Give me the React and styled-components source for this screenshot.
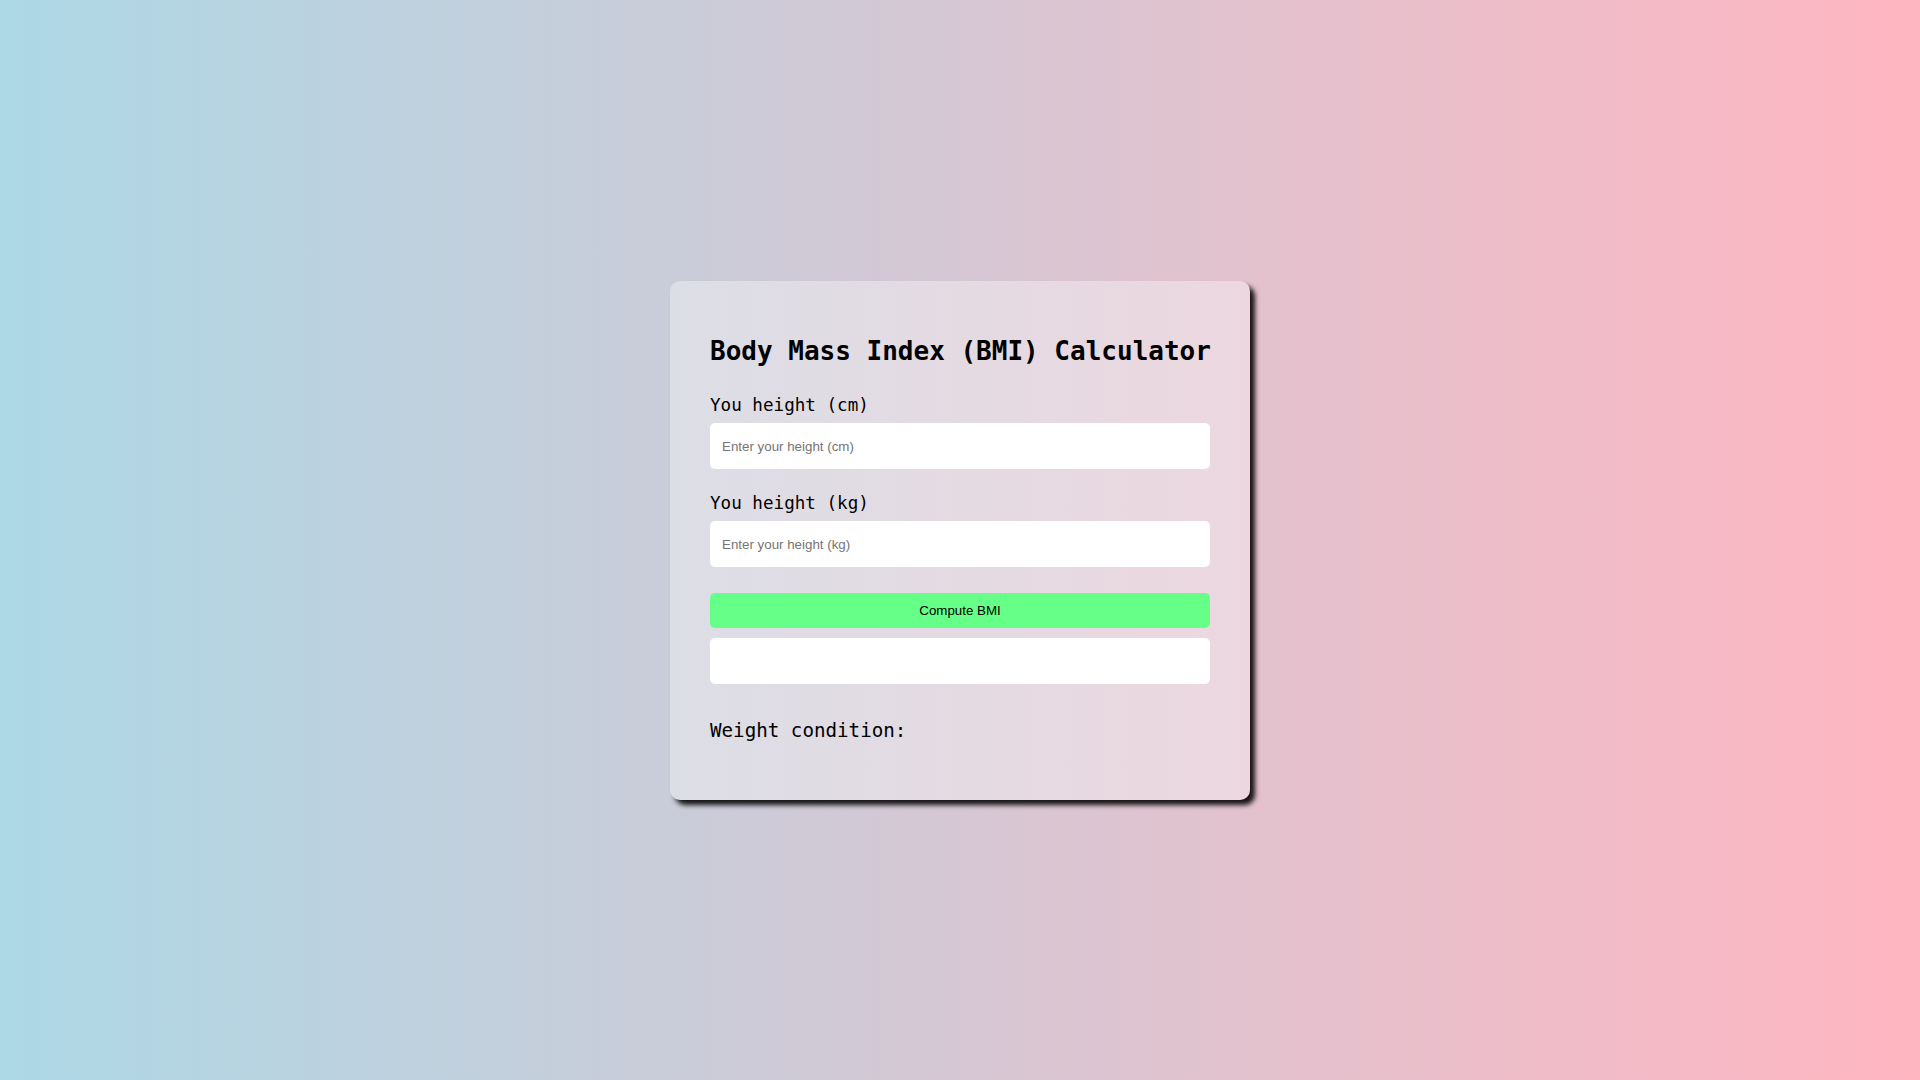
import React, { useState } from "react";
import styled, { createGlobalStyle } from "styled-components";

const GlobalStyle = createGlobalStyle`
  * { box-sizing: border-box; }
  html, body { margin: 0; padding: 0; }
  body {
    min-height: 100vh;
    background: linear-gradient(to right, #add8e6, #ffb6c1);
    font-family: "DejaVu Sans Mono", monospace;
  }
`;

const Page = styled.div`
  min-height: 100vh;
  display: flex;
  align-items: center;
  justify-content: center;
`;

const Card = styled.div`
  width: 580px;
  padding: 40px 40px 58px;
  background: rgba(255, 255, 255, 0.35);
  border-radius: 10px;
  box-shadow: 5px 5px 5px rgba(0, 0, 0, 0.9);
  display: flex;
  flex-direction: column;
`;

const Title = styled.h1`
  margin: 15px 0 0;
  font-size: 26px;
  font-weight: bold;
  color: #000;
  white-space: nowrap;
`;

const Field = styled.div`
  display: flex;
  flex-direction: column;
  gap: 8px;
  margin-top: ${(p) => p.$top}px;
`;

const Label = styled.label`
  font-size: 17.6px;
  color: #000;
`;

const Input = styled.input`
  height: 46px;
  border: none;
  border-radius: 5px;
  padding: 2px 12px 0;
  background: #fff;
  font-family: "Liberation Sans", Arial, sans-serif;
  font-size: 13.33px;
  outline: none;
  &::placeholder { color: #757575; }
`;

const Button = styled.button`
  margin-top: 26px;
  height: 35px;
  border: none;
  border-radius: 5px;
  background: #66ff88;
  font-family: "Liberation Sans", Arial, sans-serif;
  font-size: 13.33px;
  color: #000;
  cursor: pointer;
`;

const Result = styled.div`
  margin-top: 10px;
  height: 46px;
  border-radius: 5px;
  background: #fff;
  font-family: "Liberation Sans", Arial, sans-serif;
  font-size: 13.33px;
  display: flex;
  align-items: center;
  padding: 0 12px;
`;

const Condition = styled.p`
  margin: 35px 0 0;
  font-size: 19.2px;
  color: #000;
`;

const App = () => {
  const [height, setHeight] = useState("");
  const [weight, setWeight] = useState("");
  const [bmi, setBmi] = useState("");
  const [condition, setCondition] = useState("");

  const compute = () => {
    const h = parseFloat(height) / 100;
    const w = parseFloat(weight);
    if (!h || !w) return;
    const value = w / (h * h);
    setBmi(value.toFixed(1));
    if (value < 18.5) setCondition("Underweight");
    else if (value < 25) setCondition("Normal weight");
    else if (value < 30) setCondition("Overweight");
    else setCondition("Obesity");
  };

  return (
    <Page>
      <GlobalStyle />
      <Card>
        <Title>Body Mass Index (BMI) Calculator</Title>
        <Field $top={29}>
          <Label>You height (cm)</Label>
          <Input
            placeholder="Enter your height (cm)"
            value={height}
            onChange={(e) => setHeight(e.target.value)}
          />
        </Field>
        <Field $top={24}>
          <Label>You height (kg)</Label>
          <Input
            placeholder="Enter your height (kg)"
            value={weight}
            onChange={(e) => setWeight(e.target.value)}
          />
        </Field>
        <Button onClick={compute}>Compute BMI</Button>
        <Result>{bmi}</Result>
        <Condition>Weight condition: {condition}</Condition>
      </Card>
    </Page>
  );
};

export default App;
